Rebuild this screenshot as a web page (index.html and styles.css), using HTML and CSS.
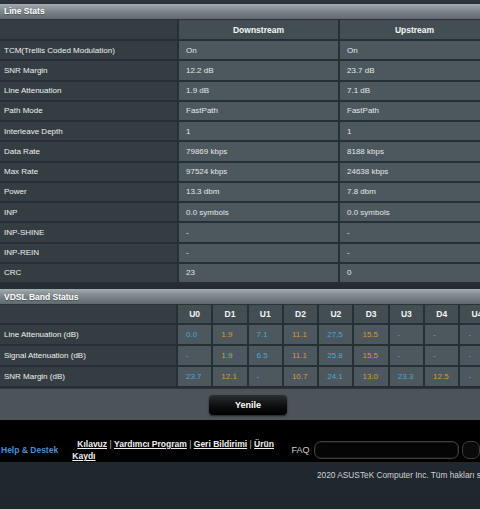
FILE: index.html
```html
<!DOCTYPE html>
<html lang="tr">
<head>
<meta charset="utf-8">
<title>DSL Log</title>
<link rel="stylesheet" href="styles.css">
</head>
<body>
<div class="page">
  <div class="top-strip"></div>

  <section class="panel">
    <div class="panel-title">Line Stats</div>
    <table class="grid stats">
      <colgroup><col class="c-label"><col class="c-down"><col class="c-up"></colgroup>
      <thead>
        <tr><th class="lbl"></th><th>Downstream</th><th>Upstream</th></tr>
      </thead>
      <tbody>
        <tr><th class="lbl">TCM(Trellis Coded Modulation)</th><td>On</td><td>On</td></tr>
        <tr><th class="lbl">SNR Margin</th><td>12.2 dB</td><td>23.7 dB</td></tr>
        <tr><th class="lbl">Line Attenuation</th><td>1.9 dB</td><td>7.1 dB</td></tr>
        <tr><th class="lbl">Path Mode</th><td>FastPath</td><td>FastPath</td></tr>
        <tr><th class="lbl">Interleave Depth</th><td>1</td><td>1</td></tr>
        <tr><th class="lbl">Data Rate</th><td>79869 kbps</td><td>8188 kbps</td></tr>
        <tr><th class="lbl">Max Rate</th><td>97524 kbps</td><td>24638 kbps</td></tr>
        <tr><th class="lbl">Power</th><td>13.3 dbm</td><td>7.8 dbm</td></tr>
        <tr><th class="lbl">INP</th><td>0.0 symbols</td><td>0.0 symbols</td></tr>
        <tr><th class="lbl">INP-SHINE</th><td>-</td><td>-</td></tr>
        <tr><th class="lbl">INP-REIN</th><td>-</td><td>-</td></tr>
        <tr><th class="lbl">CRC</th><td>23</td><td>0</td></tr>
      </tbody>
    </table>
  </section>

  <section class="panel panel-band">
    <div class="panel-title">VDSL Band Status</div>
    <table class="grid band">
      <colgroup><col class="c-blabel"><col span="9" class="c-band"></colgroup>
      <thead>
        <tr><th class="lbl"></th><th>U0</th><th>D1</th><th>U1</th><th>D2</th><th>U2</th><th>D3</th><th>U3</th><th>D4</th><th>U4</th></tr>
      </thead>
      <tbody>
        <tr><th class="lbl">Line Attenuation (dB)</th><td class="up">0.0</td><td class="dn">1.9</td><td class="up">7.1</td><td class="dn">11.1</td><td class="up">27.5</td><td class="dn">15.5</td><td class="up">-</td><td class="dn">-</td><td class="up">-</td></tr>
        <tr><th class="lbl">Signal Attenuation (dB)</th><td class="up">-</td><td class="dn">1.9</td><td class="up">6.5</td><td class="dn">11.1</td><td class="up">25.8</td><td class="dn">15.5</td><td class="up">-</td><td class="dn">-</td><td class="up">-</td></tr>
        <tr><th class="lbl">SNR Margin (dB)</th><td class="up">23.7</td><td class="dn">12.1</td><td class="up">-</td><td class="dn">10.7</td><td class="up">24.1</td><td class="dn">13.0</td><td class="up">23.3</td><td class="dn">12.5</td><td class="up">-</td></tr>
      </tbody>
    </table>
  </section>

  <div class="actions">
    <button class="btn" type="button">Yenile</button>
  </div>

  <footer class="footer">
    <div class="help">Help &amp; Destek</div>
    <div class="links"><a href="#">Kılavuz</a> <span class="sep">|</span> <a href="#">Yardımcı Program</a> <span class="sep">|</span> <a href="#">Geri Bildirimi</a> <span class="sep">|</span> <a href="#">Ürün</a> <a href="#">Kaydı</a></div>
    <div class="faq">FAQ</div>
    <div class="search"><div class="search-box"></div><div class="search-btn"></div></div>
  </footer>

  <div class="copyright">2020 ASUSTeK Computer Inc. Tüm hakları saklıdır.</div>
</div>
</body>
</html>
```

FILE: styles.css
```css
* { box-sizing: border-box; }

html, body {
  margin: 0;
  padding: 0;
}

body {
  background: #222c33;
  font-family: "Liberation Sans", Arial, sans-serif;
  font-size: 8px;
  color: #e6e9ea;
  overflow: hidden;
}

.page {
  width: 480px;
  height: 509px;
  overflow: hidden;
  background: linear-gradient(#2b3540, #1f272d);
}

.top-strip {
  height: 4px;
  background: #2c3538;
}

.panel {
  width: 500px;
  background: #4b565b;
}

.panel-band {
  margin-top: 5px;
}

.panel-title {
  height: 16px;
  line-height: 15px;
  padding-left: 4px;
  font-weight: bold;
  font-size: 8.5px;
  color: #ffffff;
  background: linear-gradient(#a3acb0, #7d878c 45%, #5f696e);
  border-bottom: 1px solid #2a3336;
  text-shadow: 0 1px 1px rgba(0,0,0,.35);
}

.panel-band .panel-title { line-height: 17px; }

.grid {
  border-collapse: collapse;
  table-layout: fixed;
}

.stats { width: 490px; }
.stats .c-label { width: 178px; }
.stats .c-down { width: 161px; }
.stats .c-up { width: 151px; }

.band { width: 495px; }
.band .c-blabel { width: 177px; }
.band .c-band { width: 35.3px; }

.grid th,
.grid td {
  border: 2px solid #263033;
  border-top: 0;
  padding: 0 0 0 7px;
  height: 20.25px;
  text-align: left;
  font-weight: normal;
  white-space: nowrap;
  overflow: hidden;
}

.grid tr > :first-child { border-left: 0; }

.grid td { background: #4c585d; color: #e4e7e8; }

.grid th.lbl {
  background: #343e42;
  color: #eef0f1;
  padding-left: 4px;
}

.grid thead th {
  height: 20px;
  text-align: center;
  padding: 0;
  font-weight: bold;
  font-size: 8.5px;
  color: #f4f6f7;
  background: #434e53;
}

.grid thead th.lbl { background: #343e42; }

.band thead th { height: 19px; }
.band tbody td,
.band tbody th.lbl { height: 21px; }
.band td { padding-left: 8px; }

.band td.up { color: #4ea6d6; }
.band td.dn { color: #d79a3a; }

.actions {
  height: 32px;
  background: #4a5459;
  border-top: 1px solid #2f383b;
  display: flex;
  align-items: center;
  justify-content: center;
  padding-left: 16px;
}

.btn {
  width: 78px;
  height: 20px;
  border: 0;
  border-radius: 4px;
  background: linear-gradient(#2a2f32, #0c0e0f 55%, #000);
  box-shadow: 0 1px 2px rgba(0,0,0,.6);
  color: #fff;
  font-family: "Liberation Sans", Arial, sans-serif;
  font-weight: bold;
  font-size: 9px;
  padding: 0;
  cursor: pointer;
}

.footer {
  height: 42px;
  background: #000;
  display: flex;
  align-items: flex-start;
  padding-top: 18px;
}

.help {
  width: 79px;
  padding-left: 1px;
  padding-top: 7px;
  color: #4f8fca;
  font-weight: bold;
  font-size: 8.5px;
}

.links {
  width: 221px;
  margin-left: -5px;
  text-indent: 5px;
  font-size: 8.5px;
  line-height: 12px;
  color: #c9c9c9;
}

.links a {
  color: #f0f0f0;
  font-weight: bold;
  text-decoration: underline;
}

.links .sep { color: #bdbdbd; }

.faq {
  width: 26px;
  padding-left: 3px;
  padding-top: 7px;
  color: #d0d0d0;
  font-size: 9px;
}

.search {
  display: flex;
  align-items: center;
  gap: 3px;
  margin-top: 3px;
}

.search-box {
  width: 145px;
  height: 18px;
  border: 1px solid #3f3f3f;
  border-radius: 7px;
  background: #050505;
  box-shadow: inset 0 0 0 1px #151515;
}

.search-btn {
  width: 18px;
  height: 18px;
  border: 1px solid #3f3f3f;
  border-radius: 7px;
  background: #0a0a0a;
}

.copyright {
  padding: 8px 0 0 317px;
  white-space: nowrap;
  color: #cfd2d4;
  font-size: 8.3px;
}
```
